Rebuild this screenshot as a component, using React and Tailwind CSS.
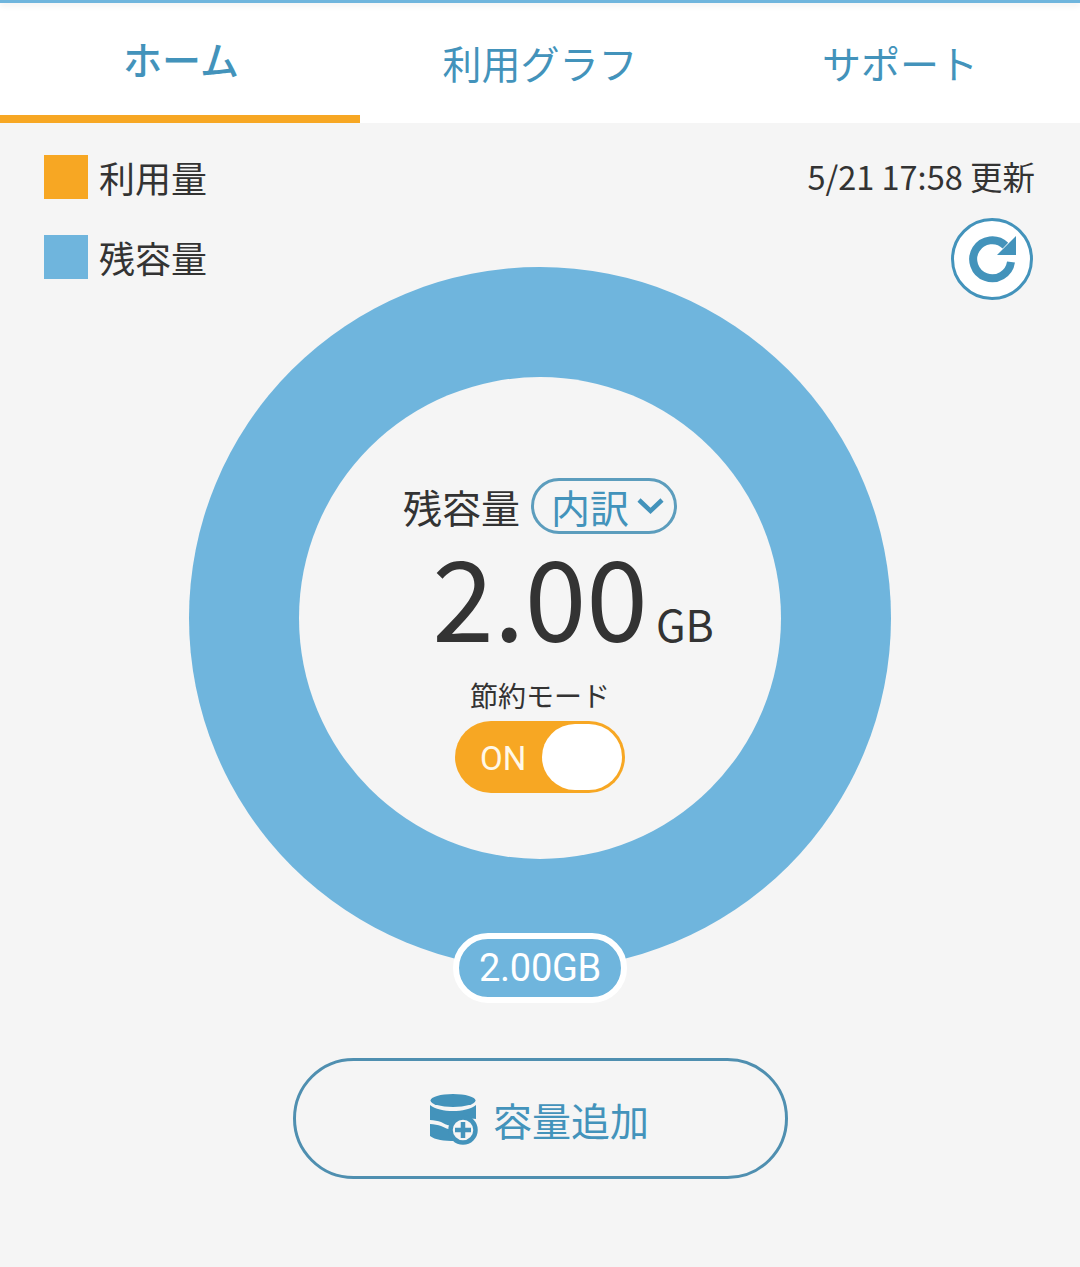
const jp = "font-['Noto_Sans_CJK_JP','Noto_Sans',sans-serif]";

function RefreshIcon() {
  return (
    <svg viewBox="0 0 56 56" className="w-[56px] h-[56px]">
      <path d="M41.4 14.6A19 19 0 1 0 47 31" fill="none" stroke="#4393bb" strokeWidth="8" />
      <path d="M52 5v19H33z" fill="#4393bb" />
    </svg>
  );
}

function Chevron() {
  return (
    <svg viewBox="0 0 27 18" className="w-[27px] h-[18px]">
      <path d="M2 3l11.5 11L25 3" fill="none" stroke="#4393bb" strokeWidth="4.5" />
    </svg>
  );
}

function StorageAddIcon() {
  return (
    <svg viewBox="0 0 52 52" className="w-[52px] h-[52px]">
      <ellipse cx="24" cy="7.5" rx="22.5" ry="6.5" fill="#4393bb" />
      <path d="M1 12c5 4 14 6 23 6s18-2 23-6v14c-10-1-19 2-22 7-6 0-9-2-13-4-3-1-7-2-11-2z" fill="#4393bb" />
      <path d="M1 31c4 0 8 1 11 2 4 2 7 3 11 4 0 4 1 8 3 11-11 0-20-1-25-5z" fill="#4393bb" />
      <circle cx="34" cy="37" r="12.5" fill="#f5f5f5" stroke="#4393bb" strokeWidth="4.5" />
      <path d="M34 29v16M26 37h16" stroke="#4393bb" strokeWidth="4.5" />
    </svg>
  );
}

export default function App() {
  return (
    <div className={`${jp} w-[1080px] h-[1267px] bg-[#f5f5f5] text-[#333333] overflow-hidden`}>
      <div className="relative h-[3px] bg-[#6fb5dd] shadow-[0_2px_6px_rgba(0,0,0,0.1)]" />
      <nav className="flex h-[120px] bg-white">
        <div className="w-[360px] border-b-8 border-[#f7a723] flex justify-center pl-[2px] pt-[27px] text-[39px] leading-[56px] font-medium text-[#4393bb]">
          ホーム
        </div>
        <div className="w-[360px] flex justify-center pt-[31px] text-[39px] leading-[56px] text-[#4393bb]">
          利用グラフ
        </div>
        <div className="w-[360px] flex justify-center pt-[31px] text-[39px] leading-[56px] text-[#4393bb]">
          サポート
        </div>
      </nav>

      <div className="flex justify-between pl-[44px] pr-[45px] pt-[32px]">
        <div className="flex flex-col gap-[36px]">
          <div className="flex items-center gap-[11px] text-[36px] leading-[44px]">
            <span className="w-[44px] h-[44px] bg-[#f7a723]" />
            利用量
          </div>
          <div className="flex items-center gap-[11px] text-[36px] leading-[44px]">
            <span className="w-[44px] h-[44px] bg-[#6fb5dd]" />
            残容量
          </div>
        </div>
        <div className="flex flex-col items-end">
          <div className="text-[32.5px] leading-[42px]">5/21 17:58 更新</div>
          <div className="mt-[21px] mr-[2px] w-[82px] h-[82px] rounded-full border-[3px] border-[#4393bb] bg-white flex items-center justify-center">
            <RefreshIcon />
          </div>
        </div>
      </div>

      <div className="relative -mt-[33px] mx-auto w-[702px] h-[702px] rounded-full bg-[#6fb5dd] flex items-center justify-center">
        <div className="w-[482px] h-[482px] rounded-full bg-[#f5f5f5] flex flex-col items-center pt-[101px]">
          <div className="flex items-center gap-[11px]">
            <span className="text-[39px] leading-[56px]">残容量</span>
            <span className="w-[146px] h-[56px] rounded-full border-[3px] border-[#5c9dbd] flex items-center pl-[17px] gap-[8px] text-[39px] leading-[50px] text-[#4393bb]">
              内訳
              <Chevron />
            </span>
          </div>
          <div className="flex items-baseline ml-[66px] mt-[1px] h-[117px]">
            <span className="text-[111px] leading-[118px]">2.00</span>
            <span className="ml-[8px] text-[43px] leading-[50px]">GB</span>
          </div>
          <div className="mt-[25px] text-[28px] leading-[36px]">節約モード</div>
          <div className="mt-[8px] w-[170px] h-[72px] rounded-full bg-[#f7a723] flex items-center justify-between pl-[25px] pr-[3px]">
            <span className="mt-[3px] font-['Roboto',sans-serif] text-[33px] text-[#fff8e8]">ON</span>
            <span className="w-[80px] h-[66px] rounded-full bg-white" />
          </div>
        </div>
        <div className="absolute left-[264px] top-[666px] w-[174px] h-[70px] rounded-full border-[6px] border-white bg-[#6fb5dd] flex items-center justify-center font-['Roboto',sans-serif] text-[38px] tracking-[-0.3px] text-white">
          2.00GB
        </div>
      </div>

      <button className="block mx-auto mt-[89px] w-[495px] h-[121px] rounded-full border-[3px] border-[#4f8fb0] bg-[#f5f5f5]">
        <span className="flex items-center justify-center gap-[12px] pr-[2px] text-[39px] leading-[56px] text-[#4393bb]">
          <StorageAddIcon />
          容量追加
        </span>
      </button>
    </div>
  );
}
